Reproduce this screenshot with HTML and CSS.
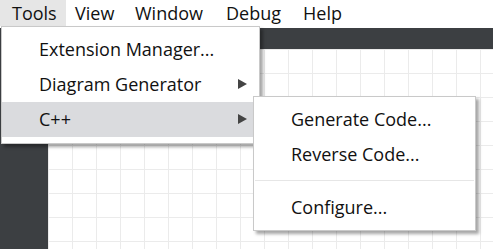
FILE: index.html
```html
<!DOCTYPE html>
<html lang="en">

<head>
  <meta charset="UTF-8">
  <title>Tools menu</title>
  <link rel="stylesheet" href="styles.css">
</head>

<body>
  <div class="app">
    <!-- 菜单栏 -->
    <div class="menubar">
      <div class="mb-item tools open">Tools</div>
      <div class="mb-item view">View</div>
      <div class="mb-item window">Window</div>
      <div class="mb-item debug">Debug</div>
      <div class="mb-item help">Help</div>
    </div>
    <div class="toolbar"></div>
    <div class="workspace">
      <div class="sidebar"></div>
      <div class="canvas"></div>
    </div>

    <!-- Tools 下拉菜单 -->
    <div class="menu tools-menu">
      <div class="menu-item">Extension Manager...</div>
      <div class="menu-item sub">Diagram Generator</div>
      <div class="menu-item sub active">C++</div>
    </div>

    <!-- C++ 子菜单 -->
    <div class="menu cpp-menu">
      <div class="menu-item">Generate Code...</div>
      <div class="menu-item">Reverse Code...</div>
      <div class="sep"></div>
      <div class="menu-item">Configure...</div>
    </div>
  </div>
</body>

</html>
```

FILE: styles.css
```css
* {
  margin: 0;
  padding: 0;
  box-sizing: border-box;
}

body {
  font-family: "Open Sans", "Noto Sans", sans-serif;
  font-size: 18px;
  color: #111;
  background: #fff;
}

.app {
  width: 493px;
  height: 249px;
  position: relative;
  overflow: hidden;
  display: flex;
  flex-direction: column;
}

.menubar {
  height: 28px;
  display: flex;
  background: #fff;

  & .mb-item {
    height: 26px;
    line-height: 26px;
    padding-left: 10px;
    white-space: nowrap;
  }
  & .tools {
    width: 66px;
    padding-left: 12px;
  }
  & .view {
    width: 59px;
    padding-left: 9px;
  }
  & .window {
    width: 91px;
  }
  & .debug {
    width: 77px;
  }
  & .mb-item.open {
    background-color: #e6e6e6;
  }
}

.toolbar {
  height: 21px;
  background: #3c3f42;
}

.workspace {
  flex: 1;
  display: flex;

  & .sidebar {
    width: 48px;
    background: #3c3f42;
  }
  & .canvas {
    flex: 1;
    background-color: #fff;
    background-image:
      linear-gradient(to right, #ebebeb 1px, transparent 1px),
      linear-gradient(to bottom, #ebebeb 1px, transparent 1px);
    background-size: 24px 24px;
  }
}

/* 弹出菜单 */
.menu {
  position: absolute;
  background: #fff;
  border: 1px solid #c9c9c9;
  padding: 5px 0;
  box-shadow: 3px 3px 3px rgba(0, 0, 0, 0.35);

  & .menu-item {
    height: 35px;
    line-height: 35px;
    padding-left: 37px;
    position: relative;
    white-space: nowrap;
  }
  & .menu-item.active {
    background-color: #dadbde;
  }
  & .menu-item.sub::after {
    content: "";
    position: absolute;
    right: 12px;
    top: 12px;
    border-left: 9px solid #444;
    border-top: 5.5px solid transparent;
    border-bottom: 5.5px solid transparent;
  }
  & .sep {
    height: 1px;
    margin: 8px 1px 9px;
    background: #e6e6e6;
  }
}

.tools-menu {
  left: 1px;
  top: 26px;
  width: 259px;
  padding-bottom: 6px;
}

.cpp-menu {
  left: 253px;
  top: 96px;
  width: 223px;
}
```
